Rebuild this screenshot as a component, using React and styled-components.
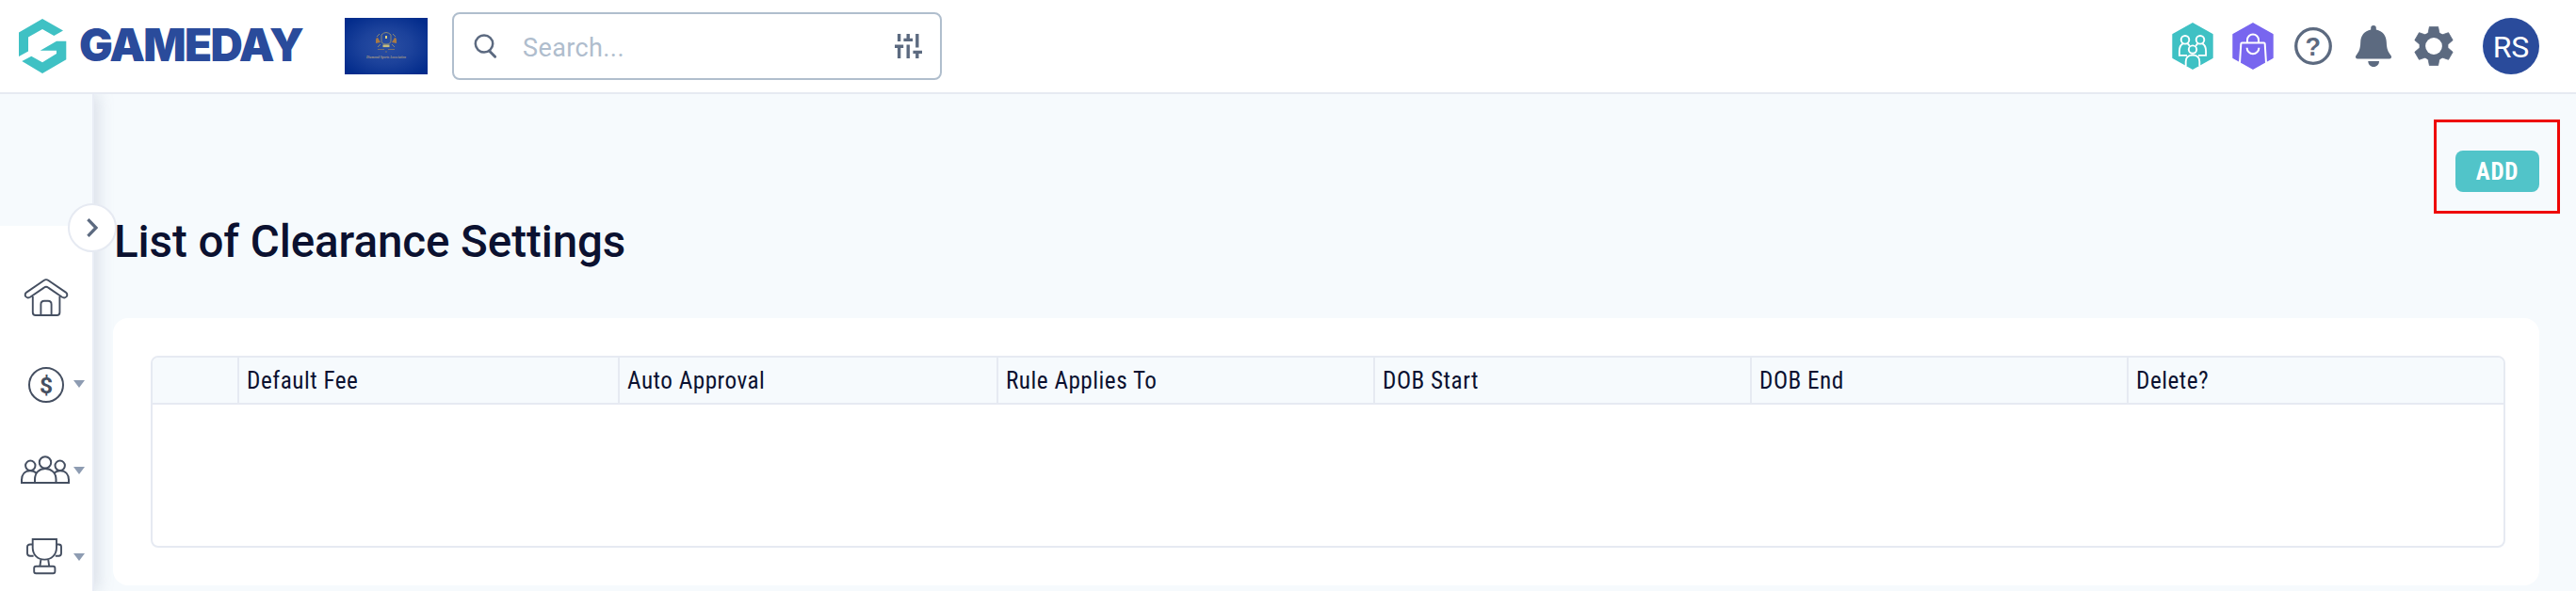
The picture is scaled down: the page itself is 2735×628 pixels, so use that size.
import React, { Component } from 'react'
import styled, { createGlobalStyle } from 'styled-components'

const GlobalStyle = createGlobalStyle`
  * {
    box-sizing: border-box;
  }

  body {
    margin: 0;
    background: #f6fafd;
    color: #0b1130;
    font-family: Roboto, "Liberation Sans", sans-serif;
  }
`

const Page = styled.div`
  display: flex;
  flex-direction: column;
  height: 628px;
  overflow: hidden;
`

const Header = styled.header`
  display: flex;
  align-items: center;
  flex: none;
  height: 100px;
  padding: 0 39px 0 20px;
  background: white;
  border-bottom: 2px solid #e6eaf2;
  position: relative;
  z-index: 2;
`

const Brand = styled.div`
  display: flex;
  align-items: center;
  width: 346px;
`

const Wordmark = styled.span`
  margin-left: 12px;
  color: #2a4b9b;
  font-family: Inter, "Liberation Sans", sans-serif;
  font-size: 47.5px;
  font-weight: 900;
  letter-spacing: -1.7px;
  line-height: 60px;
  padding-bottom: 2px;
`

const SearchBox = styled.label`
  display: flex;
  align-items: center;
  width: 520px;
  height: 72px;
  margin-left: 26px;
  padding: 0 19px 0 20px;
  border: 2px solid #b0becd;
  border-radius: 8px;
`

const SearchInput = styled.input`
  flex: 1;
  min-width: 0;
  margin-left: 25px;
  padding: 4px 0 0;
  border: 0;
  outline: 0;
  background: none;
  color: #0b1130;
  font-family: inherit;
  font-size: 27px;
  letter-spacing: 0.4px;

  &::placeholder {
    color: #afbdcd;
    opacity: 1;
  }
`

const Actions = styled.nav`
  display: flex;
  align-items: center;
  margin-left: auto;
`

const Action = styled.button`
  appearance: none;
  display: flex;
  align-items: center;
  justify-content: center;
  width: 64px;
  height: 60px;
  padding: 0;
  border: 0;
  background: none;
  color: #5c6a80;
`

const Avatar = styled.div`
  width: 60px;
  height: 60px;
  margin-left: 20px;
  border-radius: 50%;
  background: #2a4b9b;
  color: white;
  font-size: 32px;
  line-height: 62px;
  text-align: center;
`

const Body = styled.div`
  display: flex;
  flex: 1;
  min-height: 0;
`

const Sidebar = styled.aside`
  flex: none;
  width: 100px;
  background: white;
  border-right: 2px solid #e9edf5;
  box-shadow: 4px 0 16px rgba(126, 138, 164, 0.24);
  position: relative;
`

const SidebarTop = styled.div`
  height: 140px;
  margin-bottom: 30px;
  background: #f6fafd;
`

/* sits on the sidebar's edge, half over the page */
const Toggle = styled.button`
  appearance: none;
  display: flex;
  align-items: center;
  justify-content: center;
  position: absolute;
  top: 116px;
  right: -26px;
  width: 52px;
  height: 52px;
  padding: 0;
  border: 2px solid #e6eaf2;
  border-radius: 50%;
  background: white;
`

const NavItem = styled.div`
  display: flex;
  align-items: center;
  height: 92px;
  padding-left: 20px;
  color: #454f61;
`

const NavIcon = styled.div`
  display: flex;
  align-items: center;
  justify-content: center;
  width: 58px;
`

const Caret = styled.span`
  border: 6px solid transparent;
  border-top: 8px solid #8e9cb2;
  border-bottom: 0;
`

const Main = styled.main`
  display: flex;
  flex-direction: column;
  flex: 1;
  padding: 27px 39px 0 20px;
`

const AddFrame = styled.div`
  align-self: flex-end;
  width: 134px;
  height: 100px;
  margin-right: -22px;
  padding: 30px 0 0 20px;
  border: 3px solid #ee0605;
`

const AddButton = styled.button`
  appearance: none;
  display: block;
  width: 89px;
  height: 44px;
  padding: 1px 0 0;
  border: 0;
  border-radius: 8px;
  background: #51c4c9;
  color: white;
  font-family: inherit;
  font-size: 25px;
  font-stretch: 85%;
  font-weight: 700;
  letter-spacing: 0.7px;
  line-height: 43px;
`

const Title = styled.h1`
  margin: 0 0 50px 1px;
  font-size: 47.5px;
  font-weight: 500;
  letter-spacing: -0.08px;
  line-height: 61px;
  position: relative;
`

const Card = styled.section`
  padding: 40px 36px 40px 40px;
  background: white;
  border-radius: 16px;
  position: relative;
`

const Table = styled.div`
  height: 204px;
  border: 2px solid #e6eaf2;
  border-radius: 8px;
  overflow: hidden;
`

const TableHead = styled.div`
  display: grid;
  grid-template-columns: 92px 404px 402px 400px 400px 400px 1fr;
  height: 50px;
  background: #f6fafd;
  border-bottom: 2px solid #e6eaf2;
`

const HeadCell = styled.div`
  padding-left: 8px;
  border-right: 2px solid #e6eaf2;
  font-size: 25.2px;
  font-stretch: 85%;
  letter-spacing: 0.5px;
  line-height: 49px;

  &:last-child {
    border-right: 0;
  }
`

const Logo = () => (
  <svg width="52" height="58" viewBox="0 0 52 58" fill="#3fc1c4">
    <path d="M25 0L47 12.5L37.3 18L25 11L10 19.5V34.5L0 40V14.5Z" />
    <path d="M40 23.7H50.3V43.3L25 58L3.3 45L13.3 39.7L25 46.3L40 37V33.7H22.7Z" />
  </svg>
)

const ClubFlag = () => (
  <svg width="88" height="60" viewBox="0 0 88 60">
    <defs>
      <radialGradient id="flag" cx="50%" cy="50%" r="62%">
        <stop offset="0" stopColor="#2b4fa3" />
        <stop offset="0.5" stopColor="#1c429b" />
        <stop offset="1" stopColor="#032c8c" />
      </radialGradient>
    </defs>
    <rect width="88" height="60" fill="url(#flag)" />
    <g fill="none" stroke="#8b8873" strokeWidth="1">
      <path d="M39 18Q44 13 49 18V24Q49 28 44 28T39 24Z" />
      <path d="M37 17L34 20M51 17L54 20M38 28L35 31M50 28L53 31" />
      <path d="M35 33.5H42M46 33.5H53M43 36H45" stroke="#77706b" />
    </g>
    <path d="M33 24Q33 21 35 21L38 26L33 27ZM55 24Q55 21 53 21L50 26L55 27Z" fill="#a87a45" />
    <path d="M43 19H45V22H43Z" fill="#e0cf78" />
    <rect x="40.5" y="28.5" width="7" height="2.6" fill="#c7bd7c" />
    <text
      x="23"
      y="43"
      textLength="42"
      lengthAdjust="spacingAndGlyphs"
      fill="#a79a86"
      fontFamily="Liberation Serif, serif"
      fontSize="4.5"
      fontStyle="italic"
      fontWeight="700"
    >
      Diamond Sports Association
    </text>
  </svg>
)

const SearchIcon = () => (
  <svg width="28" height="28" viewBox="0 0 28 28" fill="none" stroke="#5c6a80">
    <ellipse cx="12" cy="11.5" rx="9.2" ry="9" strokeWidth="2.5" />
    <path d="M17.4 19L23.6 25.2" strokeWidth="3" strokeLinecap="round" />
  </svg>
)

const FilterIcon = () => (
  <svg width="29" height="26" viewBox="0 0 29 26" fill="none" stroke="#5c6a80" strokeWidth="3.4">
    <path d="M4.6 0V8M4.6 13V26M0 13.2H9.2" />
    <path d="M14.2 0V6M14.2 11.6V26M9.4 6.4H19" />
    <path d="M23.8 0V14.6M23.8 19.4V26M19.4 19.4H29" />
  </svg>
)

const CommunityIcon = () => (
  <svg width="44" height="50" viewBox="0 0 44 50">
    <path d="M22 .8L43 12.6V37.4L22 49.2L1 37.4V12.6Z" fill="#3fc1c4" stroke="#3fc1c4" strokeWidth="1.4" strokeLinejoin="round" />
    <g fill="none" stroke="white" strokeWidth="1.9">
      <circle cx="14" cy="18.3" r="4.3" />
      <circle cx="30" cy="18.3" r="4.3" />
      <path d="M16 34.9H7.9V30.5C7.9 26 9 23.8 11.6 22.4M16.5 22.4Q18 23.2 18.6 24.8" />
      <path d="M28 34.9H36.1V30.5C36.1 26 35 23.8 32.4 22.4M27.5 22.4Q26 23.2 25.4 24.8" />
      <circle cx="22" cy="28.6" r="4.2" />
      <path d="M14.7 46V41.5C14.7 37 17.5 34.6 22 34.6S29.3 37 29.3 41.5V46" />
    </g>
  </svg>
)

const ShopIcon = () => (
  <svg width="44" height="50" viewBox="0 0 44 50">
    <path d="M22 .8L43 12.6V37.4L22 49.2L1 37.4V12.6Z" fill="#7866ef" stroke="#7866ef" strokeWidth="1.4" strokeLinejoin="round" />
    <g fill="none" stroke="white" strokeWidth="2">
      <path d="M8 43L9.3 22.6Q9.4 21.6 10.4 21.6H33.6Q34.6 21.6 34.7 22.6L36 43" />
      <path d="M16 21.6V18.5A6 6 0 0 1 28 18.5V21.6" />
      <path d="M15.6 26.8A6.4 6.4 0 0 0 28.4 26.8" />
    </g>
  </svg>
)

const HelpIcon = () => (
  <svg width="40" height="40" viewBox="0 0 40 40">
    <circle cx="20" cy="20" r="18.3" fill="none" stroke="currentColor" strokeWidth="3.3" />
    <text x="19.8" y="29.8" textAnchor="middle" fill="currentColor" fontSize="27" fontWeight="600">
      ?
    </text>
  </svg>
)

const BellIcon = () => (
  <svg width="40" height="44" viewBox="0 0 40 44" fill="currentColor">
    <path d="M20 0Q22.8 0 22.8 2.8V4.6C29.8 6 33.6 11 33.8 18C34 26 36 28.5 38 31.2Q39.4 33 39 34Q38.6 35.6 36.6 35.6H3.4Q1.4 35.6 1 34Q.6 33 2 31.2C4 28.5 6 26 6.2 18C6.4 11 10.2 6 17.2 4.6V2.8Q17.2 0 20 0Z" />
    <path d="M14.3 38H26C26 41.5 23.4 44 20.1 44S14.3 41.5 14.3 38Z" />
  </svg>
)

const GearIcon = () => (
  <svg width="42" height="42" viewBox="-21 -21 42 42" fill="currentColor">
    <circle r="15.4" />
    {[0, 60, 120].map(angle => (
      <path
        key={angle}
        transform={`rotate(${angle})`}
        d="M-4.6 -20.6H4.6L6.2 -12.5V12.5L4.6 20.6H-4.6L-6.2 12.5V-12.5Z"
        stroke="currentColor"
        strokeWidth="0.8"
        strokeLinejoin="round"
      />
    ))}
    <circle r="8.9" fill="white" />
  </svg>
)

const ChevronIcon = () => (
  <svg width="12" height="20" viewBox="0 0 12 20" fill="none" stroke="#5c6a80" strokeWidth="3.3">
    <path d="M1.4 1.2L10 10L1.4 18.8" />
  </svg>
)

const HomeIcon = () => (
  <svg width="48" height="42" viewBox="0 0 48 42" fill="none" stroke="currentColor" strokeWidth="1.9">
    <path d="M3.2 15.6L21.6 3Q24 1.3 26.4 3L44.8 15.6Q47.2 17.5 45.8 20Q43.8 22.4 41 20.8L26.2 10.6Q24 9 21.8 10.6L7 20.8Q4.2 22.4 2.2 20Q.8 17.5 3.2 15.6Z" />
    <path d="M9.8 20V37Q9.8 40 12.8 40H35.4Q38.4 40 38.4 37V20" />
    <path d="M18.4 40V28.4Q18.4 24.8 22 24.8H26Q29.6 24.8 29.6 28.4V40" />
  </svg>
)

const DollarIcon = () => (
  <svg width="40" height="40" viewBox="0 0 40 40">
    <circle cx="20" cy="21" r="18" fill="none" stroke="currentColor" strokeWidth="2" />
    <text x="20" y="29.6" textAnchor="middle" fill="currentColor" fontSize="24.5" fontWeight="700">
      $
    </text>
  </svg>
)

const PeopleIcon = () => (
  <svg width="56" height="34" viewBox="1 1 56 34" fill="none" stroke="currentColor" strokeWidth="2">
    <circle cx="28" cy="9.4" r="6.2" />
    <circle cx="12.3" cy="12.8" r="5.2" />
    <circle cx="43.7" cy="12.8" r="5.2" />
    <path d="M17 31V27.5C17 20.5 21.5 16 28 16S39.5 20.5 39.5 27.5V31Z" />
    <path d="M17 31H3V28C3 22 6.5 18.2 12 18.2Q15.6 18.2 18.4 20.4" />
    <path d="M39.5 31H53V28C53 22 49.5 18.2 44 18.2Q40.6 18.2 37.8 20.4" />
  </svg>
)

const TrophyIcon = () => (
  <svg width="42" height="42" viewBox="2 1 42 42" fill="none" stroke="currentColor" strokeWidth="1.9">
    <path d="M8.7 3H34V12C34 19.5 28.5 24.6 21.3 24.6S8.7 19.5 8.7 12Z" />
    <path d="M8.7 8.5H6Q3 8.5 3 11V18Q3 20.7 6 20.7H9.6" />
    <path d="M34 8.5H36.3Q39 8.5 39 11V18Q39 20.7 36.3 20.7H32.8" />
    <path d="M17.4 24.6L16.4 31.5M25.2 24.6L26.2 31.5" />
    <rect x="10.2" y="31.8" width="22.2" height="7.4" rx="2" />
  </svg>
)

const actions = [
  { name: 'Community', icon: CommunityIcon },
  { name: 'Shop', icon: ShopIcon },
  { name: 'Help', icon: HelpIcon },
  { name: 'Notifications', icon: BellIcon },
  { name: 'Settings', icon: GearIcon }
]

const navItems = [
  { name: 'home', icon: HomeIcon },
  { name: 'finance', icon: DollarIcon, hasMenu: true },
  { name: 'people', icon: PeopleIcon, hasMenu: true },
  { name: 'competitions', icon: TrophyIcon, hasMenu: true }
]

const columns = ['', 'Default Fee', 'Auto Approval', 'Rule Applies To', 'DOB Start', 'DOB End', 'Delete?']

export default class App extends Component {
  static displayName = 'ClearanceSettings'

  state = {
    query: ''
  }

  search = event => this.setState({ query: event.target.value })

  render() {
    const { query } = this.state
    return (
      <Page>
        <GlobalStyle />
        <Header>
          <Brand>
            <Logo />
            <Wordmark>GAMEDAY</Wordmark>
          </Brand>
          <ClubFlag />
          <SearchBox>
            <SearchIcon />
            <SearchInput placeholder="Search..." value={query} onChange={this.search} />
            <FilterIcon />
          </SearchBox>
          <Actions>
            {actions.map(({ name, icon: Icon }) => (
              <Action key={name} aria-label={name}>
                <Icon />
              </Action>
            ))}
            <Avatar>RS</Avatar>
          </Actions>
        </Header>
        <Body>
          <Sidebar>
            <SidebarTop />
            {navItems.map(({ name, icon: Icon, hasMenu }) => (
              <NavItem key={name}>
                <NavIcon>
                  <Icon />
                </NavIcon>
                {hasMenu && <Caret />}
              </NavItem>
            ))}
            <Toggle aria-label="Expand menu">
              <ChevronIcon />
            </Toggle>
          </Sidebar>
          <Main>
            <AddFrame>
              <AddButton>ADD</AddButton>
            </AddFrame>
            <Title>List of Clearance Settings</Title>
            <Card>
              <Table>
                <TableHead>
                  {columns.map(label => (
                    <HeadCell key={label}>{label}</HeadCell>
                  ))}
                </TableHead>
              </Table>
            </Card>
          </Main>
        </Body>
      </Page>
    )
  }
}
